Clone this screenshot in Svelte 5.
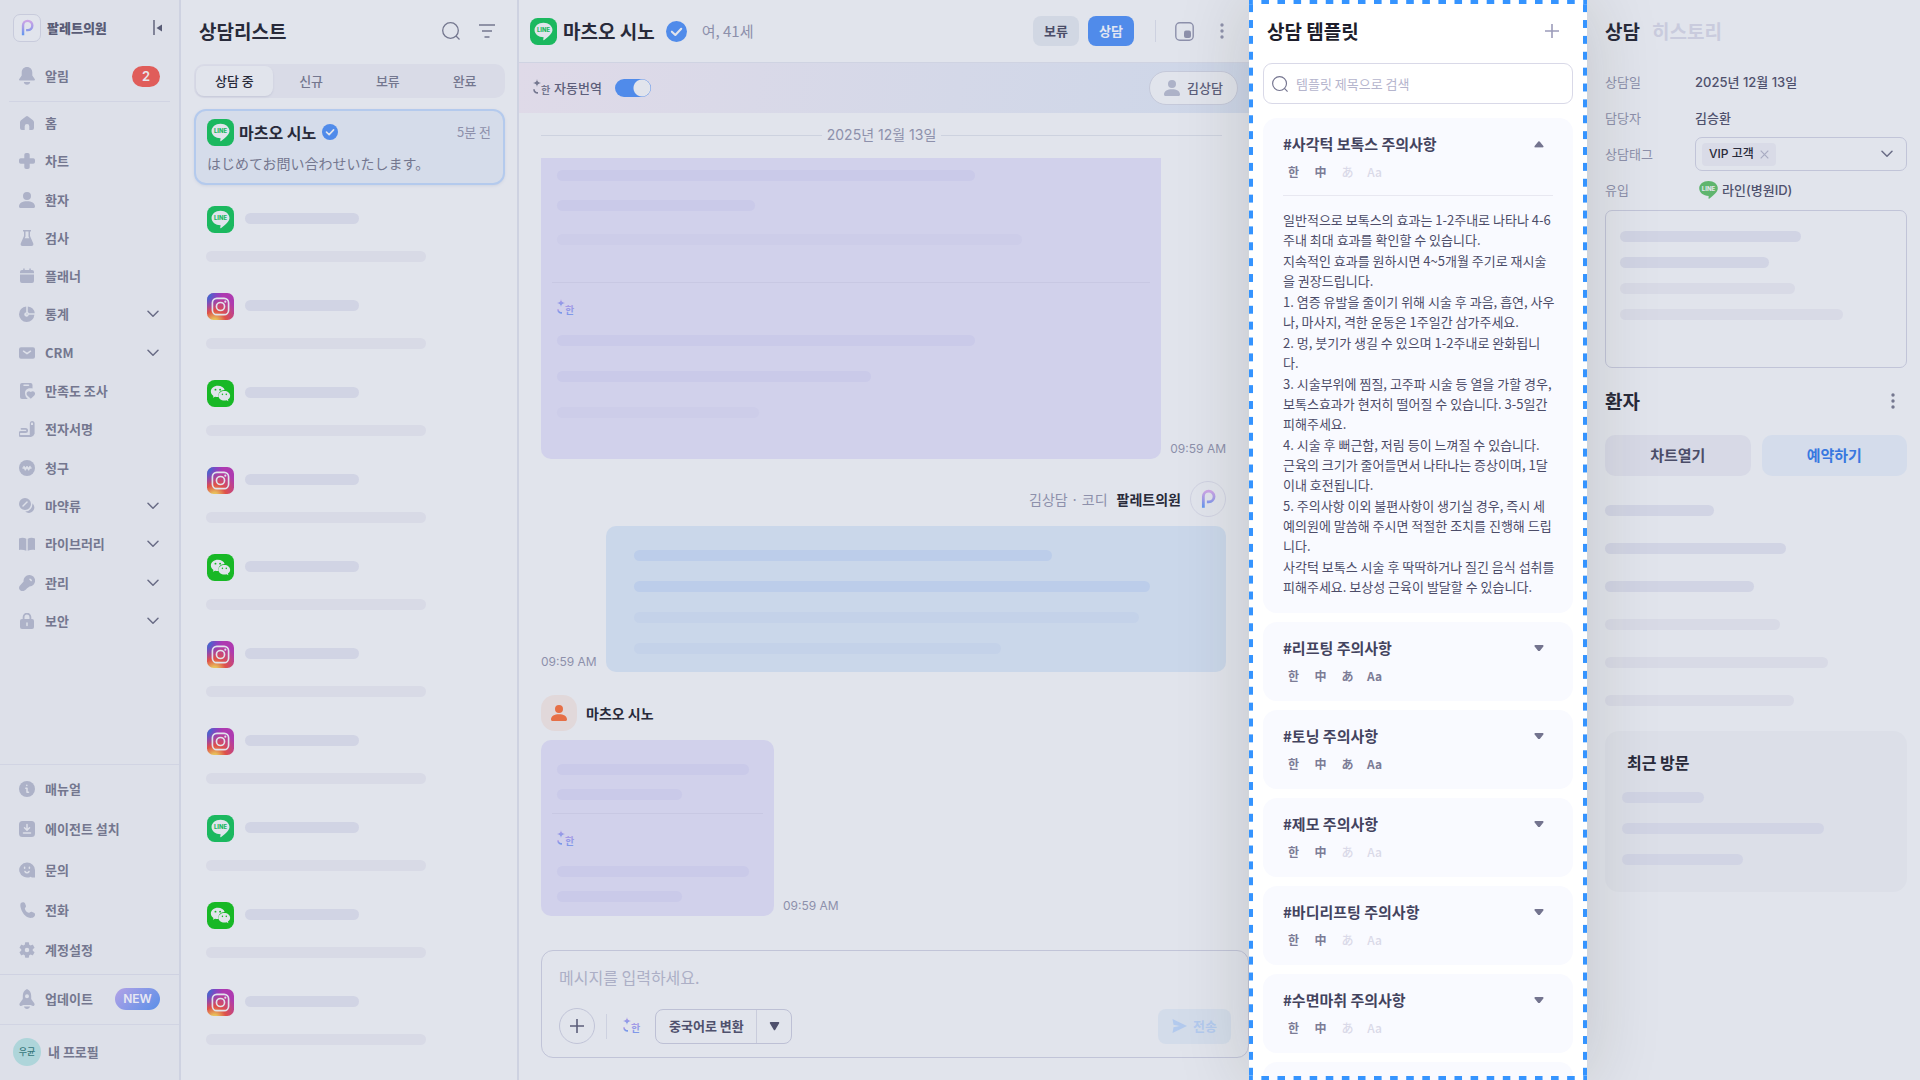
<script>
  const icons = {
    bell: { box: '0 0 16 18', fill: 'M8 0C4.7 0 2.7 2.4 2.7 5.6v3L.3 11.9c-.6.9 0 1.7.9 1.7h13.6c.9 0 1.5-.8.9-1.7l-2.4-3.3v-3C13.3 2.4 11.3 0 8 0zM4.8 15h6.4c-.3 1.8-1.5 2.8-3.2 2.8S5.1 16.800 4.800 15z' },
    home: { fill: 'M6.900 1.400 2 5.300C1.400 5.800 1 6.500 1 7.300V13a2 2 0 0 0 2 2h2.700v-3.800a2.300 2.300 0 0 1 4.600 0V15H13a2 2 0 0 0 2-2V7.300c0-.8-.4-1.500-1-2L9.100 1.400a1.800 1.800 0 0 0-2.200 0z' },
    chart: { fill: 'M5.300 1.800A1.800 1.800 0 0 1 7.100 0h1.800a1.800 1.800 0 0 1 1.800 1.800v3.500h3.500A1.800 1.800 0 0 1 16 7.100v1.800a1.800 1.800 0 0 1-1.800 1.800h-3.500v3.500A1.800 1.800 0 0 1 8.900 16H7.100a1.800 1.800 0 0 1-1.800-1.800v-3.500H1.800A1.800 1.800 0 0 1 0 8.900V7.100a1.800 1.800 0 0 1 1.800-1.800h3.500z' },
    person: { fill: 'M8 0a4 4 0 1 1 0 8 4 4 0 0 1 0-8zM0 14.500C0 11 3.500 9.300 8 9.300s8 1.700 8 5.200c0 .9-.6 1.500-1.500 1.500h-13C.6 16 0 15.400 0 14.500z' },
    flask: { fill: 'M4 0h8v1.500h-1V6l3.200 7.200c.6 1.500-.2 2.800-1.700 2.800h-9c-1.500 0-2.300-1.300-1.700-2.800L5 6V1.500H4zM6.500 1.500v4.900l-.8 1.900h4.600l-.8-1.900V1.500z' },
    calendar: { fill: 'M4.200.5h1.500V2h4.600V.5h1.500V2h1.200a2 2 0 0 1 2 2v1.300H1V4a2 2 0 0 1 2-2h1.200zM1 6.500h14V13a2 2 0 0 1-2 2H3a2 2 0 0 1-2-2z' },
    pie: { fill: 'M7.200.6v5.600a2.300 2.300 0 1 0 2.600 2.600h5.600A7.700 7.700 0 1 1 7.200.6zM8.800.5a7.700 7.700 0 0 1 6.900 6.800h-5.600L8.800 6zM7.500 7.500h1v1h-1z' },
    mail: { fill: 'M2 2.200h12a2 2 0 0 1 2 2v7.600a2 2 0 0 1-2 2H2a2 2 0 0 1-2-2V4.200a2 2 0 0 1 2-2z', cut: 'M4.500 6.200 8 8.700l3.500-2.500' },
    survey: { fill: 'M3 0h8.500a2 2 0 0 1 2 2v3.500C9.500 4.500 6 6.300 6 10c0 2.500 1.200 4.500 2.800 6H3a2 2 0 0 1-2-2V2a2 2 0 0 1 2-2zM11.800 15.800 8.300 12.400c-2.200-2.500 1-5.500 3.500-3.300 2.500-2.200 5.700.8 3.500 3.300z', cut: 'M5 2.300h4.500' },
    sign: { fill: 'M13 0a2.600 2.600 0 0 1 2.600 2.600v10.200L14 15.300h-3.200V2.600A2.600 2.600 0 0 1 13 0zM13 1.500a1 1 0 0 0-1 1V4h2V2.500a1 1 0 0 0-1-1z', line: 'M2.500 7.800h4c2.200 0 2.200 3.200 0 3.200H1.700c-2.300 0-2.300 4 0 4H12' },
    won: { fill: 'M8 0a8 8 0 1 1 0 16A8 8 0 0 1 8 0z', cut: 'M5 6.500l1.300 3.300L8 6.700l1.700 3.100L11 6.500M4 8h8' },
    pills: { fill: 'M6 0a6 6 0 1 1 0 12A6 6 0 0 1 6 0zM13.400 5.200A5.400 5.400 0 1 1 6.200 13.600a7.600 7.600 0 0 0 7.200-8.400z', cut: 'M4 8l4-4' },
    book: { fill: 'M0 2.500C2.500 1.300 5 1.400 7.300 2.700v12c-2.300-1-4.800-1.200-7.300-.8zM16 2.500C13.500 1.300 11 1.400 8.700 2.700v12c2.300-1 4.800-1.200 7.300-.8z' },
    key: { fill: 'M10.300 0a5.700 5.700 0 1 1 .2 11.400c-2 1.300-3 2.400-4.200 3.700-2.700 2.500-8 .3-5.700-4L4.600 6.500A5.700 5.700 0 0 1 10.300 0z', cut: 'M11 4.200l1.200 1.200' },
    lock: { fill: 'M3 6h10a2 2 0 0 1 2 2v6a2 2 0 0 1-2 2H3a2 2 0 0 1-2-2V8a2 2 0 0 1 2-2z', line: 'M4.600 6V4a3.400 3.400 0 0 1 6.800 0v2', cut: 'M8 10v2.500' },
    info: { fill: 'M8 0a8 8 0 1 1 0 16A8 8 0 0 1 8 0z', cut: 'M7.800 4.300v.2M6.800 7.300h1.200v3.900h1.500' },
    install: { fill: 'M3.500 0h9A3.500 3.500 0 0 1 16 3.500v9a3.500 3.500 0 0 1-3.500 3.500h-9A3.500 3.500 0 0 1 0 12.500v-9A3.500 3.500 0 0 1 3.500 0z', cut: 'M8 3.500v5.300M5.500 6.800 8 9.200l2.500-2.400M4.500 12h7' },
    ask: { fill: 'M8 .5a8 7.500 0 0 1 8 7.500v7.500h-3.200l-1-.8A8 7.500 0 1 1 8 .5z', cut: 'M5.600 5.300v1M10.400 5.300v1M6 9.500c1 1.600 3 1.600 4 0' },
    phone: { fill: 'M1.900 1C3.200-.3 5.400-.1 6 1.300l.9 2.500c.5 1.500-1.300 2-1 3.200.5 1.800 2 3.300 3.700 3.800 1.100.3 1.700-1.500 3.100-1l2.200.9c1.500.7 1.500 2.800.2 4.100-2.100 2-6.400 1.400-9.200-1.500S0 3.500 1.900 1z' },
    gear: { box: '2 2 20 20', fill: 'M19.140 12.940c.04-.3.06-.61.06-.94 0-.32-.02-.64-.07-.94l2.030-1.580c.18-.14.23-.41.12-.61l-1.920-3.320c-.12-.22-.37-.29-.59-.22l-2.390.96c-.5-.38-1.030-.7-1.620-.94L14.400 2.810c-.04-.24-.24-.41-.48-.41h-3.840c-.24 0-.43.17-.47.41L9.250 5.350c-.59.24-1.130.57-1.620.94L5.240 5.330c-.22-.08-.47 0-.59.22L2.740 8.870c-.12.21-.08.47.12.61l2.030 1.580c-.05.3-.09.63-.09.94s.02.64.07.94l-2.030 1.580c-.18.14-.23.41-.12.61l1.920 3.320c.12.22.37.29.59.22l2.390-.96c.5.38 1.030.7 1.620.94l.36 2.540c.05.24.24.41.48.41h3.840c.24 0 .44-.17.47-.41l.36-2.540c.59-.24 1.130-.56 1.620-.94l2.390.96c.22.08.47 0 .59-.22l1.920-3.320c.12-.22.07-.47-.12-.61zM12 14.800a2.800 2.800 0 1 1 0-5.600 2.800 2.800 0 0 1 0 5.600z' },
    rocket: { box: '0 0 16 20', fill: 'M8 0C5 1.300 3.800 4 3.800 7v3L.9 14c-1 1.500-.4 3 1.100 3l2.500-1h7l2.500 1c1.500 0 2.100-1.500 1.100-3l-2.900-4V7C12.200 4 11 1.300 8 0zM8 5.200a2 2 0 1 1 0 4 2 2 0 0 1 0-4zM5 17.500h6c-.3 1.500-1.500 2.500-3 2.500s-2.700-1-3-2.500z' }
  };

  const mainMenu = [
    { label: '홈', icon: 'home' },
    { label: '차트', icon: 'chart' },
    { label: '환자', icon: 'person' },
    { label: '검사', icon: 'flask' },
    { label: '플래너', icon: 'calendar' },
    { label: '통계', icon: 'pie', sub: true },
    { label: 'CRM', icon: 'mail', sub: true },
    { label: '만족도 조사', icon: 'survey' },
    { label: '전자서명', icon: 'sign' },
    { label: '청구', icon: 'won' },
    { label: '마약류', icon: 'pills', sub: true },
    { label: '라이브러리', icon: 'book', sub: true },
    { label: '관리', icon: 'key', sub: true },
    { label: '보안', icon: 'lock', sub: true }
  ];
  const helpMenu = [
    { label: '매뉴얼', icon: 'info' },
    { label: '에이전트 설치', icon: 'install' },
    { label: '문의', icon: 'ask' },
    { label: '전화', icon: 'phone' },
    { label: '계정설정', icon: 'gear' }
  ];

  const tabs = ['상담 중', '신규', '보류', '완료'];
  let activeTab = $state('상담 중');
  const threads = ['line', 'instagram', 'wechat', 'instagram', 'wechat', 'instagram', 'instagram', 'line', 'wechat', 'instagram'];

  const guide = [
    '일반적으로 보톡스의 효과는 1-2주내로 나타나 4-6\n주내 최대 효과를 확인할 수 있습니다.',
    '지속적인 효과를 원하시면 4~5개월 주기로 재시술\n을 권장드립니다.',
    '1. 염증 유발을 줄이기 위해 시술 후 과음, 흡연, 사우\n나, 마사지, 격한 운동은 1주일간 삼가주세요.',
    '2. 멍, 붓기가 생길 수 있으며 1-2주내로 완화됩니\n다.',
    '3. 시술부위에 찜질, 고주파 시술 등 열을 가할 경우,\n보톡스효과가 현저히 떨어질 수 있습니다. 3-5일간\n피해주세요.',
    '4. 시술 후 뻐근함, 저림 등이 느껴질 수 있습니다.\n근육의 크기가 줄어들면서 나타나는 증상이며, 1달\n이내 호전됩니다.',
    '5. 주의사항 이외 불편사항이 생기실 경우, 즉시 세\n예의원에 말씀해 주시면 적절한 조치를 진행해 드립\n니다.',
    '사각턱 보톡스 시술 후 딱딱하거나 질긴 음식 섭취를\n피해주세요. 보상성 근육이 발달할 수 있습니다.'
  ];
  const templates = [
    { title: '#사각턱 보톡스 주의사항', all: false, open: true },
    { title: '#리프팅 주의사항', all: true },
    { title: '#토닝 주의사항', all: true },
    { title: '#제모 주의사항', all: false },
    { title: '#바디리프팅 주의사항', all: false },
    { title: '#수면마취 주의사항', all: false }
  ];
</script>

{#snippet glyph(name)}
  {@const g = icons[name]}
  <svg class="glyph" viewBox={g.box ?? '0 0 16 16'} aria-hidden="true">
    <path d={g.fill} fill="currentColor" fill-rule="evenodd" />
    {#if g.line}<path d={g.line} fill="none" stroke="currentColor" stroke-width="1.800" stroke-linecap="round" />{/if}
    {#if g.cut}<path class="cut" d={g.cut} />{/if}
  </svg>
{/snippet}

{#snippet channel(kind)}
  <svg class="channel" viewBox="0 0 28 28" role="img" aria-label={kind}>
    {#if kind === 'line'}
      <rect width="28" height="28" rx="8" fill="#1bb85f" />
      <path d="M14 5c5.200 0 9.300 3.300 9.300 7.500 0 3.700-4.100 7-8.600 10.200-.9.600-1.100.2-.9-.8l.3-1.900C8.800 20 4.700 16.700 4.700 12.500 4.700 8.300 8.800 5 14 5z" fill="#e1e4ec" />
      <text x="14" y="14.800" text-anchor="middle" class="line-word">LINE</text>
    {:else if kind === 'wechat'}
      <rect width="28" height="28" rx="8" fill="#18b826" />
      <path d="M11.300 6C7.200 6 4 8.600 4 11.900c0 1.900 1 3.500 2.700 4.600l-.6 2 2.300-1.200c.9.300 1.900.4 3 .4h.7c-1.100-4 2-7.300 6.300-7.200C17.700 7.800 14.800 6 11.300 6z" fill="#e1e4ec" />
      <path d="M18 11.300c-3.500 0-6.100 2.200-6.100 5s2.600 5 6.100 5c.8 0 1.600-.1 2.300-.3l1.900 1-.5-1.700c1.400-.9 2.300-2.300 2.300-4 0-2.800-2.600-5-6-5z" fill="#e1e4ec" />
      <g fill="#18b826"><circle cx="8.800" cy="10" r="1" /><circle cx="13.600" cy="10" r="1" /><circle cx="16" cy="14.900" r=".8" /><circle cx="20" cy="14.900" r=".8" /></g>
    {:else}
      <rect width="28" height="28" rx="7" fill="url(#ig-warm)" />
      <rect width="28" height="28" rx="7" fill="url(#ig-cool)" />
      <g fill="none" stroke="#e1e4ec" stroke-width="1.700"><rect x="5.600" y="5.600" width="16.800" height="16.800" rx="4.600" /><circle cx="14" cy="14" r="4.200" /></g>
      <circle cx="19" cy="9" r="1.100" fill="#e1e4ec" />
    {/if}
  </svg>
{/snippet}

{#snippet verified()}
  <svg class="verified" viewBox="0 0 20 20" role="img" aria-label="인증됨"><circle cx="10" cy="10" r="10" fill="#508bea" /><path d="M5.600 10.200 8.900 13.300 14.500 7.400" fill="none" stroke="#e1e4ec" stroke-width="2" stroke-linecap="round" stroke-linejoin="round" /></svg>
{/snippet}

{#snippet translate(tone)}
  <svg class="translate" viewBox="0 0 18 18" aria-hidden="true" fill={tone}>
    <path d="M4 0C4.300 2.600 5.300 3.600 8 4 5.300 4.400 4.300 5.400 4 8 3.700 5.400 2.700 4.400 0 4 2.700 3.600 3.700 2.600 4 0z" />
    <path d="M1 10.300c0 2.500 1.300 3.600 4 3.600" fill="none" stroke={tone} stroke-width="1.600" />
    <text x="8" y="15" class="han">한</text>
  </svg>
{/snippet}

{#snippet chevron()}
  <svg class="chevron" viewBox="0 0 12 8" aria-hidden="true"><path d="M1 1.200 6 6.200l5-5" fill="none" stroke="currentColor" stroke-width="1.500" stroke-linecap="round" stroke-linejoin="round" /></svg>
{/snippet}

{#snippet brand()}
  <svg class="brand" viewBox="0 0 14 19" aria-hidden="true"><path d="M2.200 17.500V7A5 5 0 1 1 7.200 12H5.500" fill="none" stroke="url(#brand-tone)" stroke-width="2.600" /></svg>
{/snippet}

{#snippet magnifier()}
  <svg class="magnifier" viewBox="0 0 18 18" aria-hidden="true"><circle cx="8.500" cy="8.500" r="7.800" fill="none" stroke="currentColor" stroke-width="1.300" /><path d="M14 14l3.500 3.500" stroke="currentColor" stroke-width="1.300" /></svg>
{/snippet}

{#snippet dots()}
  <svg class="dots" viewBox="0 0 4 16" aria-hidden="true" fill="currentColor"><circle cx="2" cy="2" r="1.700" /><circle cx="2" cy="8" r="1.700" /><circle cx="2" cy="14" r="1.700" /></svg>
{/snippet}

{#snippet bars(widths, faintFrom)}
  {#each widths as w, i}
    <span class="bar" class:faint={i >= faintFrom} style:width="{w}px"></span>
  {/each}
{/snippet}

<svg class="defs" width="0" height="0" aria-hidden="true">
  <defs>
    <linearGradient id="brand-tone" x1="0" y1="0" x2="0" y2="1"><stop offset="0" stop-color="#cda5e6" /><stop offset=".5" stop-color="#a09be8" /><stop offset="1" stop-color="#5f97ef" /></linearGradient>
    <linearGradient id="spark-tone" x1="0" y1="0" x2="0" y2="1"><stop offset="0" stop-color="#b79be4" /><stop offset="1" stop-color="#7498ea" /></linearGradient>
    <radialGradient id="ig-warm" cx=".28" cy="1.080" r="1"><stop offset="0" stop-color="#e8cf5f" /><stop offset=".12" stop-color="#e8c05c" /><stop offset=".42" stop-color="#de5149" /><stop offset=".95" stop-color="#ae3ab0" /></radialGradient>
    <radialGradient id="ig-cool" cx="-.1" cy=".02" r=".7"><stop offset="0" stop-color="#3a73d0" /><stop offset=".3" stop-color="#4568cc" /><stop offset="1" stop-color="#7a38d8" stop-opacity="0" /></radialGradient>
  </defs>
</svg>

<div class="app">
  <aside class="sidebar">
    <header class="clinic">
      <span class="clinic-logo">{@render brand()}</span>
      <strong>팔레트의원</strong>
      <button class="plain collapse" aria-label="메뉴 접기"><svg viewBox="0 0 10 16" aria-hidden="true"><path d="M1 0v15" stroke="currentColor" stroke-width="1.400" /><path d="M9 4.500v7L3.500 8z" fill="currentColor" /></svg></button>
    </header>
    <a class="item alarm" href="#alarm">{@render glyph('bell')}<span>알림</span><b class="count">2</b></a>
    <nav class="main-nav" aria-label="주 메뉴">
      {#each mainMenu as m}
        <a class="item" href="#{m.icon}">{@render glyph(m.icon)}<span>{m.label}</span>{#if m.sub}{@render chevron()}{/if}</a>
      {/each}
    </nav>
    <nav class="help-nav" aria-label="도움말">
      {#each helpMenu as m}
        <a class="item" href="#{m.icon}">{@render glyph(m.icon)}<span>{m.label}</span></a>
      {/each}
    </nav>
    <a class="item update" href="#update">{@render glyph('rocket')}<span>업데이트</span><b class="new">NEW</b></a>
    <a class="item profile" href="#profile"><i class="initials">우균</i><span>내 프로필</span></a>
  </aside>

  <section class="list">
    <header class="list-head">
      <h1>상담리스트</h1>
      <button class="plain" aria-label="검색">{@render magnifier()}</button>
      <button class="plain" aria-label="필터"><svg class="filter" viewBox="0 0 16 14" aria-hidden="true"><path d="M0 1h16M3 7h10M5.500 13h5" stroke="currentColor" stroke-width="1.500" /></svg></button>
    </header>
    <div class="tabs" role="tablist">
      {#each tabs as t}
        <button role="tab" aria-selected={activeTab === t} class:active={activeTab === t} onclick={() => (activeTab = t)}>{t}</button>
      {/each}
    </div>
    <a class="thread-open" href="#thread">
      <span class="thread-top">{@render channel('line')}<strong>마츠오 시노</strong>{@render verified()}<time>5분 전</time></span>
      <span class="preview" lang="ja">はじめてお問い合わせいたします。</span>
    </a>
    <div class="threads">
      {#each threads as kind}
        <div class="thread">{@render channel(kind)}<span class="bar name-bar"></span><span class="bar faint text-bar"></span></div>
      {/each}
    </div>
  </section>

  <main class="chat">
    <header class="chat-head">
      {@render channel('line')}
      <h1>마츠오 시노</h1>
      {@render verified()}
      <span class="about">여, 41세</span>
      <button class="status">보류</button>
      <button class="status on">상담</button>
      <span class="rule"></span>
      <button class="plain" aria-label="작은 창"><svg class="pip" viewBox="0 0 19 19" aria-hidden="true"><rect x=".8" y=".8" width="17.400" height="17.400" rx="4" fill="none" stroke="currentColor" stroke-width="1.400" /><rect x="9" y="8.500" width="7" height="7.500" rx="2" fill="currentColor" /></svg></button>
      <button class="plain more" aria-label="더보기">{@render dots()}</button>
    </header>
    <div class="auto">
      {@render translate('#74778f')}
      <label for="auto">자동번역</label>
      <input id="auto" type="checkbox" role="switch" checked />
      <button class="assignee">{@render glyph('person')}김상담</button>
    </div>
    <div class="date"><span>2025년 12월 13일</span></div>
    <div class="messages">
      <div class="row">
        <div class="bubble theirs long">
          <div class="part original">{@render bars([418, 198, 465], 2)}</div>
          <div class="part converted">{@render translate('url(#spark-tone)')}{@render bars([418, 314, 202], 2)}</div>
        </div>
        <time>09:59 AM</time>
      </div>
      <div class="sender mine"><span>김상담 · 코디</span><strong>팔레트의원</strong><i class="round">{@render brand()}</i></div>
      <div class="row">
        <time>09:59 AM</time>
        <div class="bubble ours">{@render bars([418, 516, 505, 367], 2)}</div>
      </div>
      <div class="sender"><i class="face">{@render glyph('person')}</i><strong>마츠오 시노</strong></div>
      <div class="row">
        <div class="bubble theirs short">
          <div class="part original">{@render bars([192, 125], 2)}</div>
          <div class="part converted">{@render translate('url(#spark-tone)')}{@render bars([192, 125], 2)}</div>
        </div>
        <time>09:59 AM</time>
      </div>
    </div>
    <form class="composer">
      <textarea rows="1" aria-label="메시지" placeholder="메시지를 입력하세요."></textarea>
      <div class="tools">
        <button type="button" class="add" aria-label="추가"><svg viewBox="0 0 14 14" aria-hidden="true"><path d="M7 0v14M0 7h14" stroke="currentColor" stroke-width="1.600" /></svg></button>
        <span class="rule"></span>
        {@render translate('url(#spark-tone)')}
        <div class="convert">
          <select aria-label="변환 언어"><option>중국어로 변환</option></select>
          <svg viewBox="0 0 11 9" aria-hidden="true"><path d="M1.500.8h8L5.500 7.500z" fill="currentColor" stroke="currentColor" stroke-width="1.500" stroke-linejoin="round" /></svg>
        </div>
        <button type="button" class="send"><svg viewBox="0 0 15 14" aria-hidden="true"><path d="M.5 0 15 7 .5 14 1.500 8.300 8 7 1.500 5.700z" fill="currentColor" /></svg>전송</button>
      </div>
    </form>
  </main>

  <section class="templates">
    <header><h1>상담 템플릿</h1><button class="plain" aria-label="템플릿 추가"><svg viewBox="0 0 14 14" aria-hidden="true"><path d="M7 0v14M0 7h14" stroke="currentColor" stroke-width="1.600" /></svg></button></header>
    <label class="search">{@render magnifier()}<input type="search" aria-label="템플릿 검색" placeholder="템플릿 제목으로 검색" /></label>
    {#each templates as t}
      <article class="card">
        <div class="card-head">
          <h2>{t.title}</h2>
          <button class="plain" aria-label={t.open ? '접기' : '펼치기'} aria-expanded={!!t.open}><svg class="caret" class:up={t.open} viewBox="0 0 9 6" aria-hidden="true"><path d="M1.200.9h6.600L4.500 5z" fill="currentColor" stroke="currentColor" stroke-width="1.600" stroke-linejoin="round" /></svg></button>
        </div>
        <div class="langs"><span>한</span><span lang="zh">中</span><span lang="ja" class:off={!t.all}>あ</span><span class:off={!t.all}>Aa</span></div>
        {#if t.open}
          <div class="guide">{#each guide as p}<p>{p}</p>{/each}</div>
        {/if}
      </article>
    {/each}
    <div class="card" aria-hidden="true"></div>
  </section>

  <aside class="detail">
    <div class="detail-tabs"><button class="plain current">상담</button><button class="plain">히스토리</button></div>
    <dl>
      <dt>상담일</dt><dd>2025년 12월 13일</dd>
      <dt>담당자</dt><dd>김승환</dd>
      <dt>상담태그</dt>
      <dd><div class="tag-box"><span class="tag">VIP 고객<button class="plain" aria-label="태그 삭제"><svg viewBox="0 0 9 9" aria-hidden="true"><path d="M.7.7l7.600 7.600M8.300.7.7 8.300" stroke="currentColor" stroke-width="1.200" /></svg></button></span><button class="plain drop" aria-label="태그 선택">{@render chevron()}</button></div></dd>
      <dt>유입</dt>
      <dd class="source"><svg viewBox="0 0 19 18" aria-hidden="true"><path d="M9.500 0c5.200 0 9.300 3.200 9.300 7.300 0 4-4.800 7.500-8.300 10.300-.8.500-1.200.2-1-.6l.2-2C4.300 14.900.2 11.600.2 7.300.2 3.200 4.300 0 9.500 0z" fill="#5fb56e" /><text x="9.500" y="9.800" text-anchor="middle" class="line-word pale">LINE</text></svg>라인(병원ID)</dd>
    </dl>
    <div class="memo">{@render bars([181, 149, 175, 223], 2)}</div>
    <header class="patient"><h1>환자</h1><button class="plain" aria-label="더보기">{@render dots()}</button></header>
    <div class="actions"><button>차트열기</button><button class="book">예약하기</button></div>
    <div class="facts">{@render bars([109, 181, 149, 175, 223, 189], 3)}</div>
    <div class="visits"><h2>최근 방문</h2>{@render bars([82, 202, 121], 3)}</div>
  </aside>
</div>

<style>
  :global(body) { margin: 0; }
  .app, .app * { box-sizing: border-box; }
  .app {
    display: flex;
    height: 100vh;
    min-height: 1080px;
    overflow: hidden;
    background: #e1e4ec;
    color: #5c5e7a;
    font: 500 13px/20px "Noto Sans CJK KR", "Noto Sans", sans-serif;
  }
  .defs { position: absolute; }
  svg { display: block; flex: none; }
  h1, h2, p, dl, dd { margin: 0; }
  h1 { font-size: 19px; line-height: 28px; font-weight: 700; color: #282a3a; }
  i { font-style: normal; }
  a { color: inherit; text-decoration: none; }
  button, input, textarea, select { font: inherit; color: inherit; }
  button { cursor: pointer; border: 0; padding: 0; }
  .plain { background: none; display: flex; align-items: center; }
  time { font-family: Inter, "Noto Sans CJK KR", sans-serif; font-weight: 400; color: #8d90ab; }

  .glyph { width: 16px; color: #adb2c8; }
  .cut { fill: none; stroke: #dde0e9; stroke-width: 1.500; stroke-linecap: round; stroke-linejoin: round; }
  .channel { width: 27px; height: 27px; }
  .line-word { font: 800 6px Inter, sans-serif; fill: #1bb85f; }
  .line-word.pale { fill: #e1e4ec; }
  .han { font: 700 10px "Noto Sans CJK KR", sans-serif; }
  .translate { width: 18px; height: 18px; }
  .verified { width: 16px; }
  .chevron { width: 12px; color: #696c86; }
  .brand { width: 13px; }
  .magnifier { width: 18px; }
  .dots { width: 4px; height: 16px; }
  .bar { display: block; flex: none; height: 11px; border-radius: 6px; background: #d1d4e4; max-width: 100%; }
  .bar.faint { background: #d8dae6; }
  .rule { width: 1px; height: 22px; background: #cdd1e0; }

  /* sidebar */
  .sidebar { width: 181px; flex: none; display: flex; flex-direction: column; background: #dde0e9; border-right: 2px solid #ced2e1; font-weight: 700; color: #74778f; }
  .clinic { display: flex; align-items: center; height: 56px; padding: 0 16px 0 13px; color: #595c76; }
  .clinic-logo { display: grid; place-items: center; width: 28px; height: 28px; margin-right: 6px; border: 1px solid #c8cbdc; border-radius: 7px; background: #e1e4ec; }
  .clinic strong { flex: 1; }
  .collapse svg { width: 10px; }
  .item { display: flex; align-items: center; gap: 10px; height: 38px; padding: 0 20px 0 19px; }
  .item span { flex: 1; }
  .alarm { height: 46px; margin: 0 9px; padding: 0 10px 5px; border-bottom: 1px solid #d1d4e3; }
  .count { width: 28px; height: 21px; border-radius: 11px; background: #e05d5a; color: #e8e6ec; font: 600 13px/20px Inter, sans-serif; text-align: center; }
  .main-nav { display: flex; flex-direction: column; justify-content: space-between; min-height: 536px; margin-top: 2px; }
  .help-nav { display: flex; flex-direction: column; justify-content: space-between; min-height: 210px; margin-top: auto; padding: 4px 0; border-top: 1px solid #d1d4e3; }
  .help-nav .item { height: 40px; }
  .update { height: 50px; padding: 0 19px 2px; border-top: 1px solid #cfd2e2; }
  .new { width: 45px; height: 22px; border-radius: 11px; background: linear-gradient(135deg, #b3a2e6, #598fe8); color: #e8e8f2; font: 600 12px/21px Inter, sans-serif; text-align: center; }
  .profile { height: 56px; padding: 0 13px 2px; gap: 7px; border-top: 1px solid #d1d4e3; }
  .initials { width: 28px; height: 28px; border-radius: 50%; background: #aed5da; color: #36777b; font-size: 9px; line-height: 27px; font-weight: 500; text-align: center; }

  /* consultation list */
  .list { width: 338px; flex: none; border-right: 2px solid #ced2e1; padding: 0 12px 0 13px; }
  .list-head { display: flex; align-items: center; height: 64px; padding: 0 10px 2px 5px; gap: 19px; color: #74778f; }
  .list-head h1 { flex: 1; }
  .filter { width: 16px; }
  .tabs { display: flex; height: 34px; padding: 2px; border-radius: 10px; background: #d9dbe7; }
  .tabs button { flex: 1; border-radius: 8px; background: none; color: #74778f; }
  .tabs .active { background: #e1e4ec; color: #282a3a; box-shadow: 0 1px 2px #c5c8d8; }
  .thread-open { display: block; height: 76px; margin-top: 11px; padding: 7px 12px 0 11px; border: 2px solid #b4caed; border-radius: 12px; background: #d5dcea; box-shadow: 0 1px 3px #cfd4e2; }
  .thread-top { display: flex; align-items: center; height: 28px; }
  .thread-top strong { margin: 0 6px 0 5px; font-size: 16px; color: #282a3a; }
  .thread-top time { margin-left: auto; font-family: inherit; }
  .preview { display: block; margin-top: 7px; font-family: "Noto Sans CJK JP", sans-serif; font-size: 14px; font-weight: 400; color: #74778f; }
  .threads { padding: 21px 0 0 12px; }
  .thread { display: grid; grid-template-columns: 28px 1fr; column-gap: 11px; align-content: start; height: 87px; }
  .thread .channel { justify-self: end; }
  .name-bar { width: 114px; margin-top: 7px; }
  .text-bar { grid-column: 1 / 3; width: 220px; margin-top: 18px; }

  /* chat */
  .chat { flex: 1; min-width: 0; display: flex; flex-direction: column; }
  .chat-head { display: flex; align-items: center; height: 63px; padding: 0 25px 0 11px; border-bottom: 1px solid #cfd3e2; color: #8d90ab; }
  .chat-head h1 { margin: 0 11px 0 6px; }
  .chat-head .verified { width: 21px; }
  .about { flex: 1; margin-left: 15px; font-size: 15px; font-weight: 400; }
  .status { width: 46px; height: 30px; margin-left: 9px; border-radius: 8px; background: #d1d7e3; color: #4b4d68; font-weight: 700; }
  .status.on { background: #508bea; color: #e1e6f2; }
  .chat-head .rule { margin: 0 19px 0 21px; }
  .pip { width: 19px; }
  .more { margin-left: 26px; }
  .auto { display: flex; align-items: center; height: 50px; padding: 0 11px 0 14px; background: linear-gradient(100deg, #dfdae8, #d4d8e8 60%, #cdd6e8); }
  .auto label { margin: 0 13px 0 3px; color: #5c5e7a; }
  .auto input { appearance: none; width: 36px; height: 18px; margin: 0; border-radius: 9px; background: radial-gradient(circle at 27px 9px, #e1e4ec 8px, #508bea 9px); }
  .assignee { display: flex; align-items: center; gap: 7px; height: 34px; margin-left: auto; padding: 0 14px; border: 1px solid #c5c9da; border-radius: 17px; background: #e1e4ec; }
  .date { display: flex; align-items: center; gap: 5px; height: 45px; padding: 0 27px 1px 22px; color: #8d90ab; font-family: Inter, "Noto Sans CJK KR", sans-serif; font-size: 14px; font-weight: 400; }
  .date::before, .date::after { content: ""; flex: 1; height: 1px; background: #cdd2df; }
  .messages { padding: 0 23px 0 22px; }
  .row { display: flex; align-items: flex-end; gap: 9px; }
  .row time { flex: none; font-size: 12px; }
  .bubble { border-radius: 10px; }
  .theirs { background: #d1d1eb; }
  .theirs .bar { background: #cacae9; }
  .theirs .bar.faint { background: #cdcde9; }
  .part { display: flex; flex-direction: column; margin: 0 11px; padding: 0 5px; }
  .converted { border-top: 1px solid #c8c8e3; }
  .long { flex: 1; height: 301px; border-radius: 0 0 10px 10px; }
  .long .original { gap: 19px; height: 124px; padding-top: 12px; }
  .long .original .faint { margin-top: 4px; }
  .long .converted { gap: 25px; padding-top: 16px; }
  .long .translate { margin-bottom: -7px; }
  .short { width: 233px; height: 176px; }
  .short .original { gap: 14px; height: 73px; padding-top: 24px; }
  .short .converted { gap: 14px; padding-top: 16px; }
  .short .translate { margin-bottom: 4px; }
  .ours { flex: 1; display: flex; flex-direction: column; gap: 20px; height: 146px; padding: 24px 28px 0; background: #cad7ea; }
  .ours .bar { background: #bccdea; }
  .ours .bar.faint { background: #c4d2e9; }
  .sender { display: flex; align-items: center; gap: 9px; height: 36px; margin: 23px 0 9px; font-size: 14px; color: #282a3a; }
  .sender.mine { justify-content: flex-end; margin: 22px 0 9px; }
  .sender span { color: #8d90ab; font-weight: 400; }
  .round, .face { display: grid; place-items: center; width: 36px; height: 36px; border-radius: 18px; }
  .round { border: 1px solid #d0d2e2; }
  .round .brand { width: 15px; }
  .face { border-radius: 14px; background: #e1d8da; }
  .face .glyph { color: #e66f46; }
  .composer { display: flex; flex-direction: column; justify-content: space-between; height: 108px; margin: auto 0 22px 22px; padding: 13px 17px 13px 17px; border: 1px solid #c1c4d8; border-radius: 12px; }
  textarea { display: block; width: 100%; height: 28px; padding: 0; border: 0; outline: 0; resize: none; background: none; font-size: 16px; line-height: 26px; font-weight: 400; }
  textarea::placeholder { color: #acafc6; }
  .tools { display: flex; align-items: center; }
  .add { display: grid; place-items: center; width: 36px; height: 36px; border: 1px solid #c1c4d8; border-radius: 50%; background: none; }
  .add svg { width: 14px; }
  .tools .rule { height: 25px; margin: 0 16px 0 11px; }
  .convert { display: flex; align-items: center; width: 137px; height: 35px; margin-left: 14px; border: 1px solid #bdc0d5; border-radius: 8px; color: #4f516d; }
  .convert select { appearance: none; width: 101px; height: 33px; padding: 0 0 0 13px; border: 0; border-right: 1px solid #c9ccdc; background: none; font-weight: 700; }
  .convert svg { width: 11px; margin-left: 12px; }
  .send { display: flex; align-items: center; justify-content: center; gap: 6px; width: 73px; height: 35px; margin-left: auto; border-radius: 8px; background: #d3dcea; color: #b3caee; font-weight: 700; }
  .send svg { width: 15px; }

  /* templates */
  .templates { position: relative; z-index: 1; width: 338px; flex: none; overflow: hidden; padding: 4px 14px; background: #fff; box-shadow: 0 0 70px rgba(40, 36, 20, .16); }
  .templates::after {
    --dash: #3594ff 0 25%, transparent 25% 75%, #3594ff 75%;
    content: "";
    position: absolute;
    inset: 0;
    pointer-events: none;
    background:
      linear-gradient(90deg, var(--dash)) top / 16px 4px round no-repeat,
      linear-gradient(90deg, var(--dash)) bottom / 16px 4px round no-repeat,
      linear-gradient(var(--dash)) left / 4px 16px no-repeat round,
      linear-gradient(var(--dash)) right / 4px 16px no-repeat round;
  }
  .templates header { display: flex; align-items: center; justify-content: space-between; height: 59px; padding: 0 14px 5px 4px; color: #9c9cba; }
  .templates header svg { width: 14px; }
  .templates h1 { color: #1d1d2b; }
  .search { display: flex; align-items: center; gap: 8px; height: 41px; padding: 0 8px; border: 1px solid #d9d9e8; border-radius: 9px; color: #74748f; }
  .search .magnifier { width: 16px; }
  .search input { flex: 1; min-width: 0; padding: 0; border: 0; outline: 0; background: none; font-weight: 400; }
  .search input::placeholder { color: #b5b5cd; }
  .card { min-height: 79px; margin-top: 9px; padding: 14px 20px 0; border-radius: 14px; background: #f9faff; }
  .search + .card { margin-top: 14px; padding-bottom: 16px; }
  .card-head { display: flex; align-items: center; justify-content: space-between; height: 24px; padding-right: 9px; color: #74748f; }
  .card h2 { font-size: 15px; line-height: 24px; color: #43435e; }
  .caret { width: 10px; }
  .caret.up { transform: rotate(180deg); }
  .langs { display: grid; grid-template-columns: repeat(4, 27px); height: 20px; margin: 6px 0 0 -3px; justify-items: center; font-size: 12px; font-weight: 700; color: #7c7c96; }
  .langs .off { color: #d9d9e8; font-weight: 500; }
  .guide { display: grid; gap: 1px; margin-top: 13px; padding-top: 14px; border-top: 1px solid #e8e8f1; color: #4c4c68; font-weight: 400; }
  .guide p { white-space: pre; }

  /* detail */
  .detail { width: 333px; flex: none; padding: 0 13px 0 18px; }
  .detail-tabs { display: flex; gap: 12px; height: 64px; padding-bottom: 2px; font-size: 19px; font-weight: 700; color: #c9cbdd; }
  .detail-tabs .current { color: #282a3a; }
  dl { display: grid; grid-template-columns: 90px 1fr; grid-auto-rows: 36px; align-items: center; }
  dt { font-weight: 400; color: #8d90ab; }
  dd { font-family: Inter, "Noto Sans CJK KR", sans-serif; color: #4f516d; }
  .tag-box { display: flex; align-items: center; justify-content: space-between; height: 34px; padding: 0 13px 0 6px; border: 1px solid #c1c4d8; border-radius: 7px; }
  .tag { display: flex; align-items: center; gap: 6px; height: 23px; padding: 0 7px; border-radius: 4px; background: #d9dbe7; color: #282a3a; font: 500 12px/22px Inter, "Noto Sans CJK KR", sans-serif; }
  .tag svg { width: 9px; color: #a9acc2; }
  .source { display: flex; align-items: center; gap: 4px; padding-left: 4px; }
  .source svg { width: 19px; }
  .memo { display: flex; flex-direction: column; gap: 15px; height: 158px; margin-top: 2px; padding: 20px 14px; border: 1px solid #c1c4d8; border-radius: 7px; }
  .patient { display: flex; align-items: center; justify-content: space-between; height: 67px; padding: 0 12px 2px 0; color: #74778f; }
  .actions { display: grid; grid-template-columns: 1fr 1fr; gap: 11px; }
  .actions button { height: 41px; padding-bottom: 1px; border-radius: 10px; background: #d7d9e6; color: #4b4d68; font-size: 15px; font-weight: 700; }
  .actions .book { background: #d4dceb; color: #3978e0; }
  .facts { display: flex; flex-direction: column; gap: 27px; padding: 29px 0 25px; }
  .visits { display: flex; flex-direction: column; gap: 20px; height: 161px; padding: 19px 17px; border-radius: 14px; background: #dcdfe8; }
  .visits h2 { margin: 0 0 -2px 5px; font-size: 16px; line-height: 24px; color: #282a3a; }
</style>
